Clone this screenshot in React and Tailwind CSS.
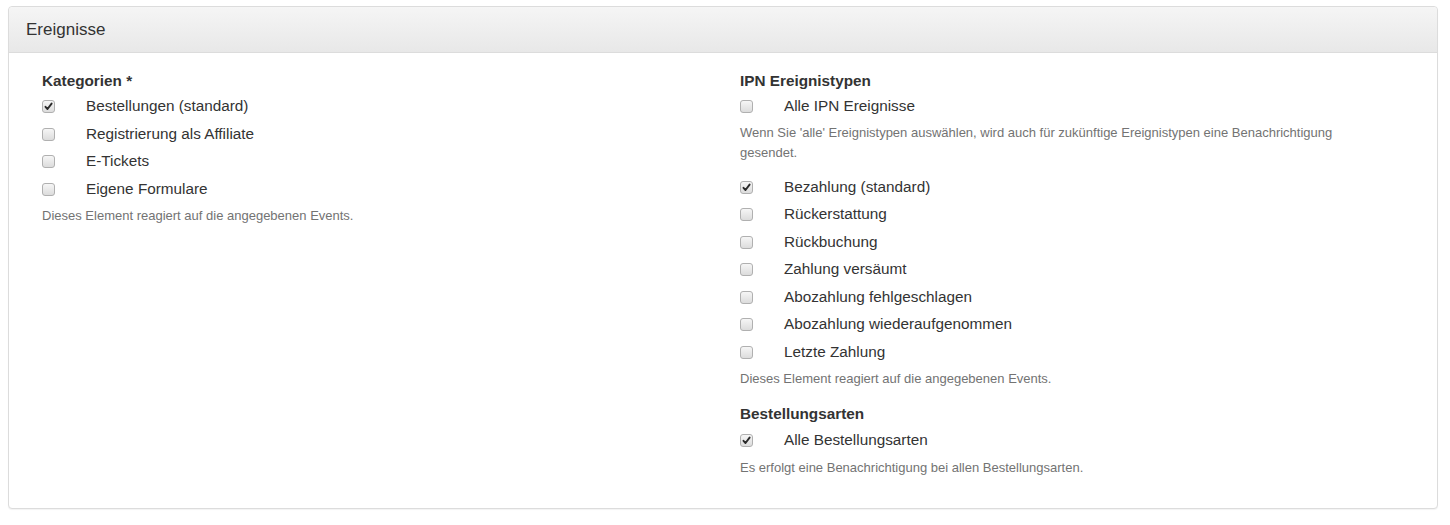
import React from "react";

function Box({ checked }) {
  return (
    <span className="flex h-[13px] w-[13px] shrink-0 items-center justify-center rounded-[3px] border border-[#b0b0b0] bg-gradient-to-b from-[#f6f6f6] to-[#dcdcdc]">
      {checked && (
        <svg width="9" height="9" viewBox="0 0 9 9">
          <path d="M1.5 4.8 L3.5 7 L7.6 1.6" fill="none" stroke="#2a2a2a" strokeWidth="1.9" strokeLinecap="round" strokeLinejoin="round" />
        </svg>
      )}
    </span>
  );
}

function Row({ label, checked }) {
  return (
    <div className="flex h-[27.5px] items-center">
      <div className="w-[44px]">
        <Box checked={checked} />
      </div>
      <span className="text-[15.3px] text-[#333]">{label}</span>
    </div>
  );
}

function Heading({ children, className = "" }) {
  return <div className={"h-[20px] text-[15.3px] font-bold leading-[20px] text-[#333] " + className}>{children}</div>;
}

function Help({ children, className = "" }) {
  return <div className={"text-[13px] leading-[20px] text-[#737373] " + className}>{children}</div>;
}

export default function App() {
  return (
    <div className="min-h-[525px] bg-white pl-[8px] pt-[6px]" style={{ fontFamily: '"Liberation Sans", Arial, sans-serif' }}>
      <div className="w-[1430px] h-[503px] rounded-[4px] border border-[#dcdcdc] bg-white shadow-[0_1px_1px_rgba(0,0,0,0.05)]">
        <div className="flex h-[46px] items-center rounded-t-[4px] border-b border-[#dcdcdc] bg-gradient-to-b from-[#f5f5f5] to-[#e8e8e8] pl-[17px] text-[17px] text-[#333]">
          Ereignisse
        </div>
        <div className="flex pl-[33px] pt-[18px]">
          <div className="w-[698px]">
            <Heading>Kategorien *</Heading>
            <div className="mt-[2px]">
              <Row label="Bestellungen (standard)" checked />
              <Row label="Registrierung als Affiliate" />
              <Row label="E-Tickets" />
              <Row label="Eigene Formulare" />
            </div>
            <Help className="mt-[3px]">Dieses Element reagiert auf die angegebenen Events.</Help>
          </div>
          <div className="w-[620px]">
            <Heading>IPN Ereignistypen</Heading>
            <div className="mt-[2px]">
              <Row label="Alle IPN Ereignisse" />
            </div>
            <Help className="mt-[2.5px] mb-[10.5px]">
              Wenn Sie 'alle' Ereignistypen auswählen, wird auch für zukünftige Ereignistypen eine Benachrichtigung gesendet.
            </Help>
            <Row label="Bezahlung (standard)" checked />
            <Row label="Rückerstattung" />
            <Row label="Rückbuchung" />
            <Row label="Zahlung versäumt" />
            <Row label="Abozahlung fehlgeschlagen" />
            <Row label="Abozahlung wiederaufgenommen" />
            <Row label="Letzte Zahlung" />
            <Help className="mt-[3px]">Dieses Element reagiert auf die angegebenen Events.</Help>
            <Heading className="mt-[15px]">Bestellungsarten</Heading>
            <div className="mt-[3px]">
              <Row label="Alle Bestellungsarten" checked />
            </div>
            <Help className="mt-[3px]">Es erfolgt eine Benachrichtigung bei allen Bestellungsarten.</Help>
          </div>
        </div>
      </div>
    </div>
  );
}
